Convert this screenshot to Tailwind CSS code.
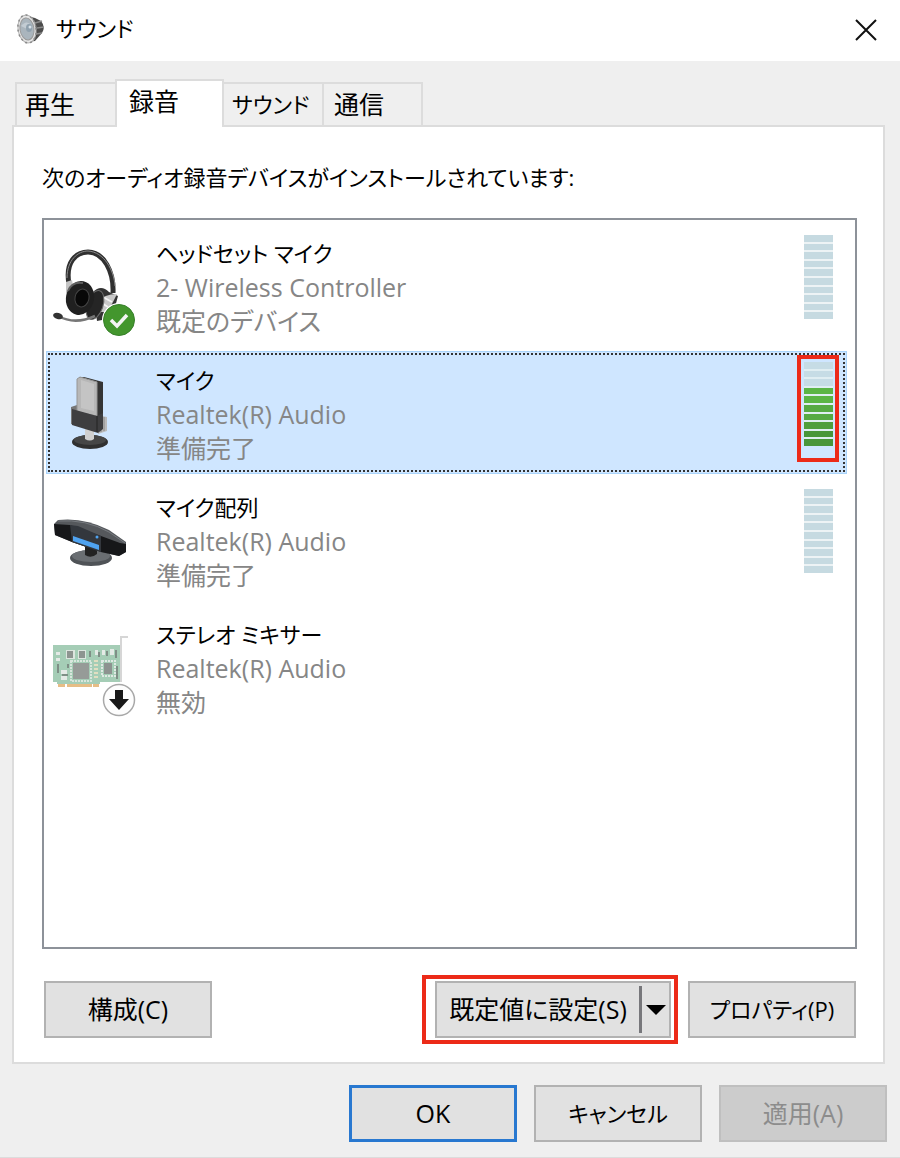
<!DOCTYPE html>
<html lang="ja">
<head>
<meta charset="utf-8">
<meta name="viewport" content="width=device-width, initial-scale=1">
<title>サウンド</title>
<script src="https://cdn.jsdelivr.net/npm/@tailwindcss/browser@4"></script>
</head>
<body class="flex min-h-screen flex-col border-b border-[#dcdcdc] bg-[#efefef] font-['Open_Sans','Noto_Sans_CJK_JP',sans-serif] text-[25px] whitespace-nowrap text-black [font-feature-settings:'palt']">

<header class="flex h-[61px] items-center justify-between bg-white pr-[18px] pl-4">
  <h1 class="flex items-center gap-3 pb-1 text-[22px]">
    <svg class="h-8 w-7" viewBox="0 0 28 32" aria-hidden="true">
      <path d="M11 3 L19 5 L25 8 Q30 14 26 20 L19 28 L11 29Z" fill="#4c4c4c"/>
      <path d="M19 10 L26 8 M21 15 L28 14 M20 21 L26 20" stroke="#8c8c8c" stroke-width="1.5"/>
      <ellipse cx="11" cy="16" rx="9" ry="14" transform="rotate(-8 11 16)" fill="#e6e6e6" stroke="#b5b5b5" stroke-width="1"/>
      <ellipse cx="11" cy="16" rx="9" ry="14" transform="rotate(-8 11 16)" fill="none" stroke="#8a8a8a" stroke-width="1.5" stroke-dasharray="2 3"/>
      <ellipse cx="11" cy="16" rx="7" ry="11" transform="rotate(-8 11 16)" fill="#aab5bd" stroke="#9a9a9a" stroke-width="1"/>
      <path d="M5 13 Q10 7 14 11 L13 17Z" fill="#c3ccd3"/>
      <ellipse cx="13" cy="15" rx="3" ry="4" fill="#8fa0ad"/>
      <circle cx="14" cy="14" r="1.5" fill="#d8e2e9"/>
    </svg>
    サウンド
  </h1>
  <button type="button" aria-label="閉じる" class="p-1">
    <svg class="size-6" viewBox="0 0 24 24" fill="none" stroke="#111" stroke-width="2"><path d="M2 1 L22 21 M22 1 L2 21"/></svg>
  </button>
</header>

<main class="flex flex-1 flex-col pt-[18px] pr-[15px] pl-3">
  <div role="tablist" class="relative -mb-[2px] ml-[3px] flex items-end">
    <button type="button" role="tab" aria-selected="false" class="h-[45px] w-[100px] border-2 border-r-0 border-[#dcdcdc] px-2 text-left">再生</button>
    <button type="button" role="tab" aria-selected="true" class="h-12 w-[109px] border-2 border-b-0 border-[#dcdcdc] bg-white px-3 pb-1 text-left">録音</button>
    <button type="button" role="tab" aria-selected="false" class="h-[45px] w-[98px] border-y-2 border-[#dcdcdc] px-2 text-left text-[22px]">サウンド</button>
    <button type="button" role="tab" aria-selected="false" class="h-[45px] w-[101px] border-2 border-[#dcdcdc] px-[10px] text-left">通信</button>
  </div>

  <section role="tabpanel" aria-label="録音" class="flex flex-1 flex-col border-2 border-[#dcdcdc] bg-white pt-8 pr-[27px] pb-[18px] pl-7">
    <h2 id="devices" class="text-[22px] leading-9">次のオーディオ録音デバイスがインストールされています:</h2>

    <div role="listbox" aria-labelledby="devices" class="mt-[23px] mr-[-1px] flex flex-1 flex-col gap-[6px] border-2 border-[#8d9299] py-[5px] pr-[9px] pl-[3px]">
      <div role="option" aria-selected="false" class="flex h-[121px] items-start pr-[13px] pl-[5px]">
        <svg class="mt-[21px] h-[92px] w-[84px]" viewBox="52 246 84 92" aria-hidden="true">
          <path d="M69 284 C65 262 76 252 88 252 C104 252 114 272 113 293" fill="none" stroke="#303030" stroke-width="5"/>
          <path d="M67 278 C67 260 78 251 88 251 C104 252 114 270 115 286" fill="none" stroke="#8a8a8a" stroke-width="1"/>
          <path d="M66 282 L72 280 L73 286 L66 294Z" fill="#c4c4c4"/>
          <path d="M93 292 Q101 284 109 292 L118 296 L112 318 L97 321Z" fill="#333"/>
          <path d="M98 302 Q104 294 117 294 L113 302 L108 312 L97 312Z" fill="#c8c8c8"/>
          <path d="M103 297 L112 302 M100 302 L108 307" stroke="#f3f3f3" stroke-width="2"/>
          <ellipse cx="95" cy="305" rx="8" ry="15" transform="rotate(18 95 305)" fill="#252525" stroke="#6a6a6a"/>
          <ellipse cx="80" cy="298" rx="14" ry="17" transform="rotate(12 80 298)" fill="#202020"/>
          <path d="M68 291 Q72 281 83 283" fill="none" stroke="#606060" stroke-width="2"/>
          <ellipse cx="82" cy="298" rx="7" ry="9" transform="rotate(12 82 298)" fill="#080808" stroke="#444"/>
          <path d="M58 316 C69 322 82 322 95 316" fill="none" stroke="#777" stroke-width="2.5"/>
          <ellipse cx="58" cy="316" rx="5" ry="3" transform="rotate(15 58 316)" fill="#333"/>
          <circle cx="119" cy="320" r="17" fill="#fff"/>
          <circle cx="119" cy="320" r="15.5" fill="#43962d" stroke="#37802a"/>
          <path d="M111 320 L117 326 L127 315" fill="none" stroke="#f4f4f4" stroke-width="3.5"/>
        </svg>
        <div class="ml-5 flex-1 pt-[11px] leading-[34px] text-[#868686]">
          <p class="text-[22px] text-black">ヘッドセット マイク</p>
          <p>2- Wireless Controller</p>
          <p>既定のデバイス</p>
        </div>
        <div role="meter" aria-label="入力レベル" aria-valuenow="0" aria-valuemin="0" aria-valuemax="10" class="mt-[10px] flex h-[84px] w-[29px] flex-col gap-[2px] bg-[#edf3f5]">
          <i class="flex-1 bg-[#c6dae1]"></i><i class="flex-1 bg-[#c6dae1]"></i><i class="flex-1 bg-[#c6dae1]"></i><i class="flex-1 bg-[#c6dae1]"></i><i class="flex-1 bg-[#c6dae1]"></i><i class="flex-1 bg-[#c6dae1]"></i><i class="flex-1 bg-[#c6dae1]"></i><i class="flex-1 bg-[#c6dae1]"></i><i class="flex-1 bg-[#c6dae1]"></i><i class="flex-1 bg-[#c6dae1]"></i>
        </div>
      </div>

      <div role="option" aria-selected="true" class="relative flex h-[121px] items-start bg-[#cfe6ff] pr-[13px] pl-[5px] ring-1 ring-[#a9d4fb]">
        <span class="absolute inset-px border-2 border-dotted border-[#333]"></span>
        <svg class="mt-[21px] h-[92px] w-[84px]" viewBox="52 373 84 92" aria-hidden="true">
          <path d="M71 407 L77 405 V426 L71 424Z" fill="#777"/>
          <path d="M97 415 L107 417 V431 L98 434Z" fill="#bbb"/>
          <path d="M101 416 V432 M104 417 V431" stroke="#888"/>
          <ellipse cx="90" cy="442" rx="18" ry="7" fill="#303030"/>
          <ellipse cx="90" cy="440" rx="16" ry="5" fill="#464646"/>
          <path d="M85 427 H94 V439 Q90 442 85 439Z" fill="#cfcfcf"/>
          <path d="M79 377 L84 377 L103 382 V416 L96 418Z" fill="#353535"/>
          <path d="M77 379 L80 377 L97 382 V416 L77 412Z" fill="#b7b7b7" stroke="#969696"/>
          <path d="M81 380 L94 384 V411 L81 408Z" fill="#c4c4c4"/>
          <path d="M72 409 L97 416 L103 413 V429 L98 433 L72 425Z" fill="#3e3e40"/>
          <path d="M97 416 V432" stroke="#222"/>
        </svg>
        <div class="ml-5 flex-1 pt-[11px] leading-[34px] text-[#868686]">
          <p class="text-[22px] text-black">マイク</p>
          <p>Realtek(R) Audio</p>
          <p>準備完了</p>
        </div>
        <div role="meter" aria-label="入力レベル" aria-valuenow="7" aria-valuemin="0" aria-valuemax="10" class="mt-[10px] flex h-[84px] w-[29px] flex-col gap-[2px] bg-[#e0eef2]">
          <i class="flex-1 bg-[#c6dce5]"></i><i class="flex-1 bg-[#c6dce5]"></i><i class="flex-1 bg-[#c6dce5]"></i><i class="flex-1 bg-[#5bb545]"></i><i class="flex-1 bg-[#5bb545]"></i><i class="flex-1 bg-[#56aa43]"></i><i class="flex-1 bg-[#56aa43]"></i><i class="flex-1 bg-[#4f9f3c]"></i><i class="flex-1 bg-[#49963a]"></i><i class="flex-1 bg-[#49963a]"></i>
        </div>
        <span class="absolute top-[3px] right-[7px] h-[107px] w-[42px] border-4 border-[#ec2a18]"></span>
      </div>

      <div role="option" aria-selected="false" class="flex h-[121px] items-start pr-[13px] pl-[5px]">
        <svg class="mt-[21px] h-[92px] w-[84px]" viewBox="52 500 84 92" aria-hidden="true">
          <ellipse cx="91" cy="558" rx="21" ry="8" fill="#4f5357"/>
          <ellipse cx="91" cy="556" rx="19" ry="6" fill="#6a6e72"/>
          <path d="M85 547 H97 V554 Q91 559 85 555Z" fill="#222"/>
          <path d="M54 524 L58 520 Q84 517 109 530 L126 542 V552 L119 556 L101 552 L72 542 L55 535Z" fill="#55585c"/>
          <path d="M54 524 L70 525 L101 536 L120 543 L126 544 V552 L119 556 L101 552 L72 542 L55 535Z" fill="#161719"/>
          <path d="M70 525 L78 526 L101 536 V552 L72 542Z" fill="#33373d"/>
          <path d="M73 536 L99 545 V550 L73 541Z" fill="#4fa3f1"/>
          <circle cx="97" cy="537" r="1.5" fill="#4fa3f1"/>
          <path d="M58 521 Q86 519 109 532 L125 543" fill="none" stroke="#777b80"/>
        </svg>
        <div class="ml-5 flex-1 pt-[11px] leading-[34px] text-[#868686]">
          <p class="text-[22px] text-black">マイク配列</p>
          <p>Realtek(R) Audio</p>
          <p>準備完了</p>
        </div>
        <div role="meter" aria-label="入力レベル" aria-valuenow="0" aria-valuemin="0" aria-valuemax="10" class="mt-[10px] flex h-[84px] w-[29px] flex-col gap-[2px] bg-[#edf3f5]">
          <i class="flex-1 bg-[#c6dae1]"></i><i class="flex-1 bg-[#c6dae1]"></i><i class="flex-1 bg-[#c6dae1]"></i><i class="flex-1 bg-[#c6dae1]"></i><i class="flex-1 bg-[#c6dae1]"></i><i class="flex-1 bg-[#c6dae1]"></i><i class="flex-1 bg-[#c6dae1]"></i><i class="flex-1 bg-[#c6dae1]"></i><i class="flex-1 bg-[#c6dae1]"></i><i class="flex-1 bg-[#c6dae1]"></i>
        </div>
      </div>

      <div role="option" aria-selected="false" class="flex h-[121px] items-start pr-[13px] pl-[5px]">
        <svg class="mt-[21px] h-[92px] w-[84px]" viewBox="52 627 84 92" aria-hidden="true">
          <path d="M58 683 H65 V687 H58Z M67 683 H92 V687 H67Z M93 683 H99 V687 H93Z" fill="#e6bd86"/>
          <path d="M53 645 H120 V682 H100 V684 H57 V682 H53Z" fill="#a5cdb6"/>
          <path d="M121 682 V637 H128" fill="none" stroke="#d6d6d6" stroke-width="2"/>
          <path d="M66 650 H75 V659 H66Z M78 650 H86 V659 H78Z" fill="#dce5df"/>
          <path d="M67 651 H73 V658 H67Z M79 651 H85 V658 H79Z" fill="#8d9490"/>
          <path d="M71 661 H91 V681 H71Z" fill="none" stroke="#d8e6dd" stroke-width="2" stroke-dasharray="2 1"/>
          <path d="M73 663 H89 V679 H73Z" fill="#969b98"/>
          <path d="M102 661 H115 V676 H102Z" fill="none" stroke="#dfe9e3" stroke-width="2" stroke-dasharray="2 1"/>
          <path d="M104 663 H112 V674 H104Z" fill="#8d9390"/>
          <path d="M56 652 H60 V655 H56Z M56 658 H60 V661 H56Z M61 670 H67 V674 H61Z M61 676 H67 V680 H61Z M95 650 H98 V655 H95Z M102 650 H105 V655 H102Z M110 649 H114 V655 H110Z" fill="#e4eae6"/>
          <path d="M58 664 V673 M68 664 V668 M90 651 V657 M99 652 V657 M107 651 V656 M116 650 V658 M117 666 V679 M62 675 H68" stroke="#7f8f86" stroke-width="2"/>
          <path d="M96 660 V680" stroke="#e2dec1" stroke-width="4" stroke-dasharray="2 2"/>
          <circle cx="119" cy="700" r="15.5" fill="#fdfdfd" stroke="#a8a8a8" stroke-width="1.5"/>
          <path d="M115 690 H123 V699 H129 L119 710 L109 699 H115Z" fill="#181818"/>
        </svg>
        <div class="ml-5 flex-1 pt-[11px] leading-[34px] text-[#868686]">
          <p class="text-[22px] text-black">ステレオ ミキサー</p>
          <p>Realtek(R) Audio</p>
          <p>無効</p>
        </div>
      </div>
    </div>

    <div class="mt-[26px] flex items-center">
      <button type="button" class="ml-[2px] h-[57px] w-42 border-2 border-[#b2b2b2] bg-[#e1e1e1]">構成(C)</button>
      <div class="ml-auto flex border-4 border-[#ec2a18] py-[2px] pr-[3px] pl-[9px]">
        <div class="flex h-[57px] items-center border-2 border-[#b2b2b2] bg-[#e1e1e1]">
          <button type="button" class="h-full w-[202px]">既定値に設定(S)</button>
          <span class="h-[47px] w-[3px] bg-[#77777b]"></span>
          <button type="button" aria-label="その他の設定" class="flex h-full w-[27px] items-center justify-center">
            <svg class="h-[10px] w-5" viewBox="0 0 20 10" aria-hidden="true"><path d="M0 0 H20 L10 10Z"/></svg>
          </button>
        </div>
      </div>
      <button type="button" class="ml-[10px] h-[57px] w-42 border-2 border-[#b2b2b2] bg-[#e1e1e1] text-[22px]">プロパティ(P)</button>
    </div>
  </section>
</main>

<footer class="flex justify-end gap-[17px] pt-[21px] pr-[13px] pb-[15px]">
  <button type="button" class="h-[57px] w-42 border-3 border-[#2878d0] bg-[#e1e1e1]">OK</button>
  <button type="button" class="h-[57px] w-42 border-2 border-[#b2b2b2] bg-[#e1e1e1] text-[22px]">キャンセル</button>
  <button type="button" disabled class="h-[57px] w-42 border-2 border-[#bfbfbf] bg-[#cccccc] text-[#8c8c8c]">適用(A)</button>
</footer>
</body>
</html>
